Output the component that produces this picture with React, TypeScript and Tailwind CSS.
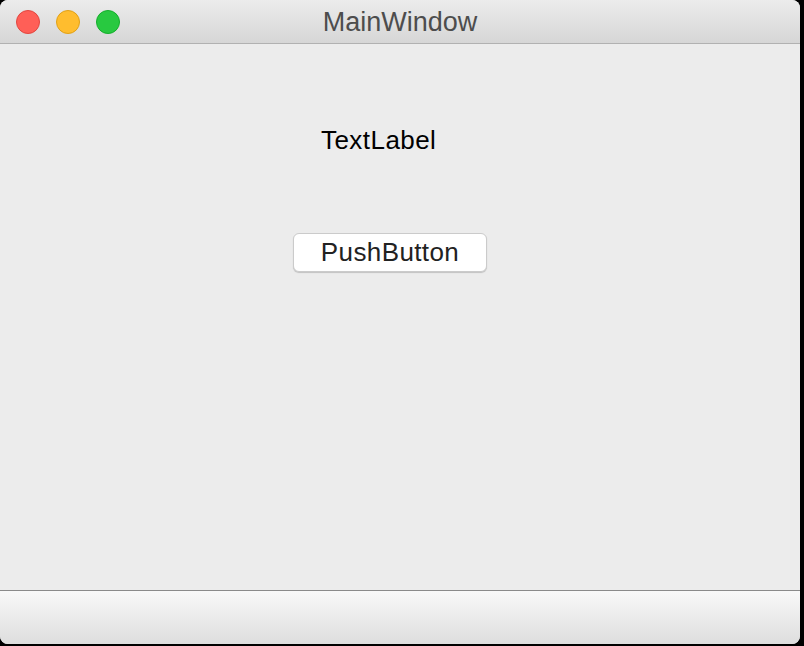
const lights = [
  { bg: "bg-[#ff5f57]", border: "border-[#e2463f]" },
  { bg: "bg-[#ffbd2e]", border: "border-[#e1a116]" },
  { bg: "bg-[#28c940]", border: "border-[#14ae2b]" },
];

export default function App() {
  return (
    <div className="h-[646px] w-[804px] bg-black" style={{ fontFamily: '"Liberation Sans", Arial, sans-serif' }}>
      <div className="flex h-[644px] w-[800px] flex-col overflow-hidden rounded-[8px] bg-[#ececec]">
        {/* title bar */}
        <div className="relative flex h-[44px] shrink-0 items-center border-b border-[#b1b1b1] bg-gradient-to-b from-[#ececec] to-[#d6d6d6]">
          <div className="flex gap-4 pl-[16px]">
            {lights.map((l, i) => (
              <span key={i} className={`h-[24px] w-[24px] rounded-full border ${l.bg} ${l.border}`} />
            ))}
          </div>
          <div className="absolute inset-x-0 top-0 flex h-[43px] items-center justify-center pt-[1px] text-[27px] text-[#4d4d4d]">
            MainWindow
          </div>
        </div>

        {/* central widget */}
        <div className="flex flex-1 flex-col items-start">
          <div className="ml-[321px] mt-[81px] text-[26px] leading-[30px] tracking-[0.45px] text-black">TextLabel</div>
          <button className="ml-[293px] mt-[78px] flex h-[39px] w-[194px] items-center justify-center rounded-[6px] border border-[#cbcbcb] bg-white text-[26px] tracking-[0.4px] text-[#222] shadow-[0_1px_1px_rgba(0,0,0,0.18)]">
            PushButton
          </button>
        </div>

        {/* status bar */}
        <div className="h-[54px] shrink-0 border-t border-[#8a8a8a] bg-gradient-to-b from-[#f8f8f8] to-[#dedede]" />
      </div>
    </div>
  );
}
